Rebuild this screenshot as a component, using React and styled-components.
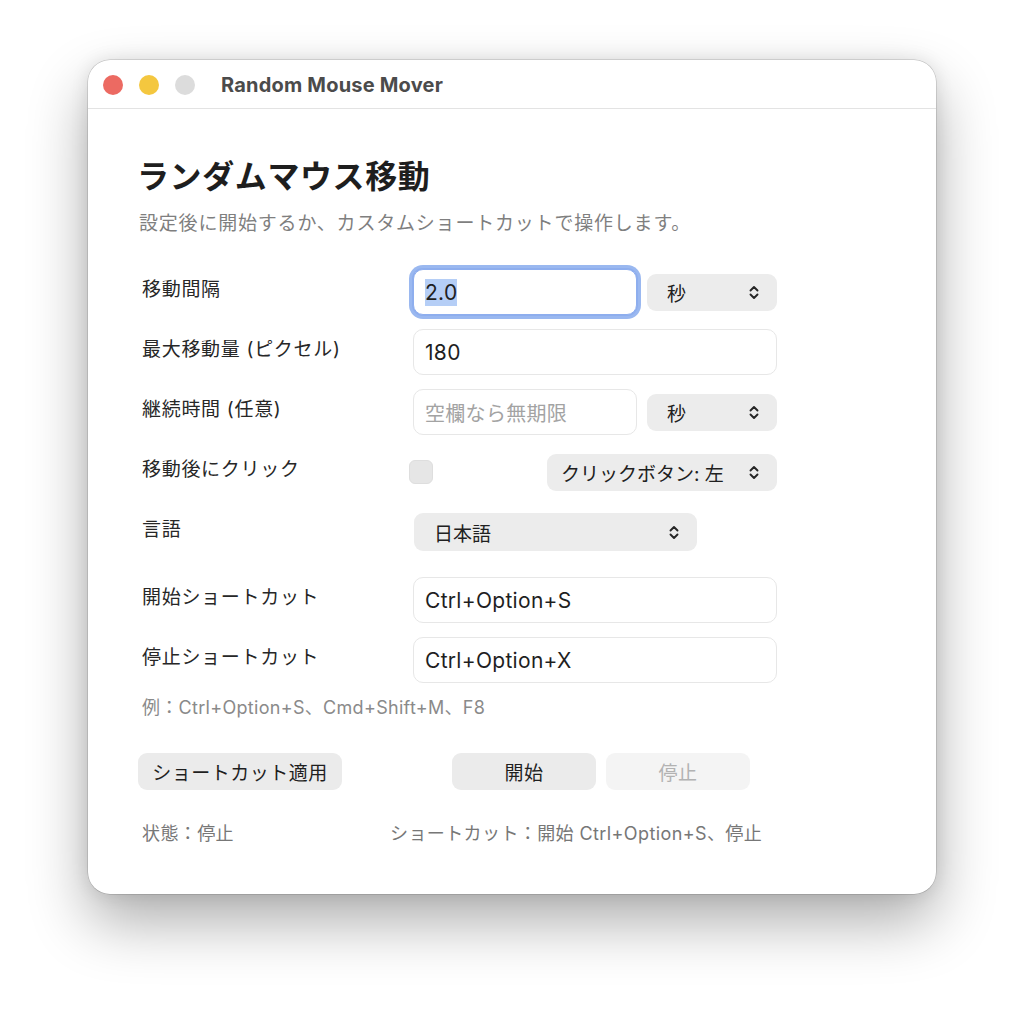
import React from "react";
import styled, { createGlobalStyle } from "styled-components";

const Global = createGlobalStyle`
  html, body { margin: 0; padding: 0; background: #ffffff; }
  body { font-family: Inter, "Noto Sans CJK JP", "Noto Sans", sans-serif; }
  * { box-sizing: border-box; }
`;

const Page = styled.div`
  width: 1024px;
  height: 1011px;
  padding: 60px 0 0 88px;
  background: #ffffff;
`;

const Window = styled.div`
  width: 848px;
  height: 834px;
  border-radius: 22px;
  background: #ffffff;
  box-shadow: 0 0 0 0.5px rgba(0, 0, 0, 0.22), 0 28px 60px rgba(0, 0, 0, 0.32),
    0 0 18px rgba(0, 0, 0, 0.1);
  display: flex;
  flex-direction: column;
  overflow: hidden;
`;

const TitleBar = styled.div`
  height: 49px;
  flex: none;
  display: flex;
  align-items: center;
  padding: 2px 0 0 15px;
  border-bottom: 1px solid #e3e3e3;
`;

const Light = styled.span`
  width: 20px;
  height: 20px;
  border-radius: 50%;
  background: ${(p) => p.$c};
  margin-right: 16px;
  flex: none;
`;

const WindowTitle = styled.div`
  margin-left: 10px;
  font-size: 20px;
  font-weight: 700;
  color: #4b4b4b;
  letter-spacing: 0.2px;
`;

const Content = styled.div`
  padding: 48px 0 0 50px;
  display: flex;
  flex-direction: column;
`;

const Heading = styled.h1`
  margin: 0;
  font-size: 32px;
  line-height: 40px;
  font-weight: 700;
  color: #1e1e1e;
  margin-left: -1px;
  letter-spacing: 0.6px;
`;

const Subtitle = styled.p`
  margin: 14px 0 0 1px;
  font-size: 19px;
  line-height: 26px;
  color: #7f7f7f;
  letter-spacing: 0.8px;
`;

const Form = styled.div`
  margin-top: 32px;
  display: flex;
  flex-direction: column;
  gap: 14px;
`;

const Row = styled.div`
  display: grid;
  grid-template-columns: 275px 364px;
  height: 46px;
  align-items: center;
  margin-top: ${(p) => (p.$extra ? "8px" : "0")};
`;

const Label = styled.div`
  padding-left: 4px;
  font-size: 19px;
  line-height: 26px;
  color: #272727;
  margin-bottom: 5px;
  letter-spacing: 0.7px;
`;

const Controls = styled.div`
  display: flex;
  align-items: center;
  justify-content: ${(p) => p.$justify || "flex-start"};
  gap: 10px;
  height: 46px;
`;

const Field = styled.div`
  height: 46px;
  width: ${(p) => p.$w || "364px"};
  flex: none;
  border: 1px solid #e7e7e7;
  border-radius: 10px;
  background: #fff;
  display: flex;
  align-items: center;
  padding-left: 11px;
  font-size: ${(p) => (p.$placeholder ? "20px" : "21px")};
  letter-spacing: ${(p) => (p.$placeholder ? "0.3px" : "0.3px")};
  color: ${(p) => (p.$placeholder ? "#a3a3a3" : "#1f1f1f")};
  box-shadow: ${(p) =>
    p.$focused ? "0 0 0 1px #8eaeee, 0 0 0 4px #9ab8f0" : "none"};
  border-color: ${(p) => (p.$focused ? "#8eaeee" : "#e7e7e7")};
`;

const Selected = styled.span`
  background: #b5cef6;
  line-height: 27px;
`;

const Select = styled.div`
  height: ${(p) => p.$h || "37px"};
  width: ${(p) => p.$w};
  flex: none;
  border-radius: 9px;
  background: #ececec;
  display: flex;
  align-items: center;
  justify-content: space-between;
  padding: 0 18px 0 ${(p) => p.$pl || "20px"};
  font-size: 19px;
  color: #202020;
  margin-left: ${(p) => p.$ml || "0"};
`;

const Check = styled.div`
  width: 24px;
  height: 24px;
  border-radius: 6px;
  background: #e6e6e6;
  border: 1px solid #dedede;
  margin-left: -4px;
`;

const Hint = styled.div`
  margin: 13px 0 0 4px;
  font-size: 18px;
  line-height: 24px;
  color: #8a8a8a;
  letter-spacing: 0.3px;
`;

const Buttons = styled.div`
  margin-top: 33px;
  width: 612px;
  display: flex;
  justify-content: space-between;
  align-items: center;
`;

const ButtonGroup = styled.div`
  display: flex;
  gap: 10px;
`;

const Button = styled.div`
  height: 37px;
  width: ${(p) => p.$w || "204px"};
  border-radius: 9px;
  background: ${(p) => (p.$disabled ? "#f4f4f4" : "#ebebeb")};
  color: ${(p) => (p.$disabled ? "#b2b2b2" : "#1f1f1f")};
  font-size: 19px;
  letter-spacing: 0.5px;
  display: flex;
  align-items: center;
  justify-content: center;
`;

const Status = styled.div`
  margin-top: 32px;
  display: grid;
  grid-template-columns: 248px auto;
  font-size: 18px;
  line-height: 24px;
  color: #777777;
  padding-left: 4px;
  letter-spacing: 0.4px;
`;

const Chevron = () => (
  <svg width="10" height="17" viewBox="0 0 10 17" fill="none">
    <path
      d="M1.5 6.5 L5 3 L8.5 6.5 M1.5 10.5 L5 14 L8.5 10.5"
      stroke="#262626"
      strokeWidth="1.9"
      strokeLinecap="round"
      strokeLinejoin="round"
    />
  </svg>
);

export default function App() {
  return (
    <Page>
      <Global />
      <Window>
        <TitleBar>
          <Light $c="#ec6a62" />
          <Light $c="#f4c73f" />
          <Light $c="#dcdcdc" />
          <WindowTitle>Random Mouse Mover</WindowTitle>
        </TitleBar>
        <Content>
          <Heading>ランダムマウス移動</Heading>
          <Subtitle>設定後に開始するか、カスタムショートカットで操作します。</Subtitle>
          <Form>
            <Row>
              <Label>移動間隔</Label>
              <Controls>
                <Field $w="224px" $focused>
                  <Selected>2.0</Selected>
                </Field>
                <Select $w="130px">
                  <span>秒</span>
                  <Chevron />
                </Select>
              </Controls>
            </Row>
            <Row>
              <Label>最大移動量 (ピクセル)</Label>
              <Controls>
                <Field>180</Field>
              </Controls>
            </Row>
            <Row>
              <Label>継続時間 (任意)</Label>
              <Controls>
                <Field $w="224px" $placeholder>
                  空欄なら無期限
                </Field>
                <Select $w="130px">
                  <span>秒</span>
                  <Chevron />
                </Select>
              </Controls>
            </Row>
            <Row>
              <Label>移動後にクリック</Label>
              <Controls $justify="space-between">
                <Check />
                <Select $w="230px" $pl="14px">
                  <span>クリックボタン: 左</span>
                  <Chevron />
                </Select>
              </Controls>
            </Row>
            <Row>
              <Label>言語</Label>
              <Controls>
                <Select $w="283px" $h="38px" $ml="1px">
                  <span>日本語</span>
                  <Chevron />
                </Select>
              </Controls>
            </Row>
            <Row $extra>
              <Label>開始ショートカット</Label>
              <Controls>
                <Field>Ctrl+Option+S</Field>
              </Controls>
            </Row>
            <Row>
              <Label>停止ショートカット</Label>
              <Controls>
                <Field>Ctrl+Option+X</Field>
              </Controls>
            </Row>
          </Form>
          <Hint>例：Ctrl+Option+S、Cmd+Shift+M、F8</Hint>
          <Buttons>
            <Button>ショートカット適用</Button>
            <ButtonGroup>
              <Button $w="144px">開始</Button>
              <Button $w="144px" $disabled>
                停止
              </Button>
            </ButtonGroup>
          </Buttons>
          <Status>
            <span>状態：停止</span>
            <span>ショートカット：開始 Ctrl+Option+S、停止</span>
          </Status>
        </Content>
      </Window>
    </Page>
  );
}
